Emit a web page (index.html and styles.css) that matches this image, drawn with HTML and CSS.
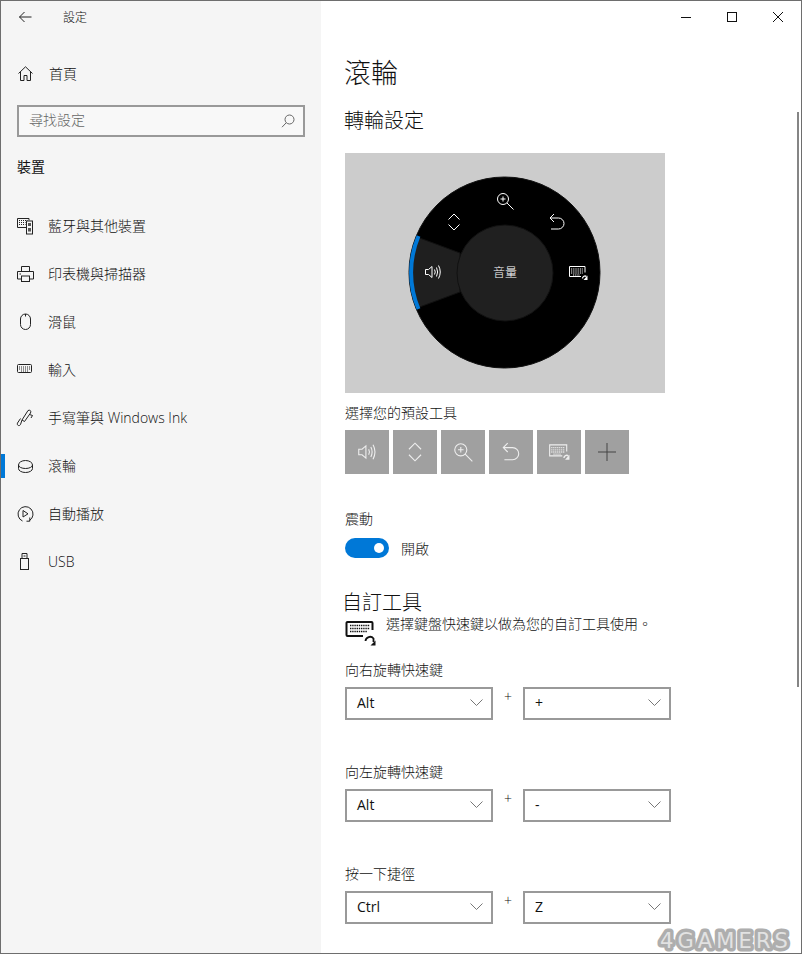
FILE: index.html
```html
<!DOCTYPE html>
<html lang="zh-Hant">
<head>
<meta charset="utf-8">
<title>設定</title>
<link rel="stylesheet" href="styles.css">
</head>
<body>
<svg class="defs" width="0" height="0" aria-hidden="true">
  <symbol id="i-vol" viewBox="0 0 20 20"><path d="M2.5 7.5H5.5L9 4.5V15.5L5.5 12.5H2.5Z"/><path d="M11.5 7.5Q13 10 11.5 12.5M13.5 5.5Q15.8 10 13.5 14.5M15.5 3.5Q19 10 15.5 16.5"/></symbol>
  <symbol id="i-scroll" viewBox="0 0 20 20"><path d="M4.5 7.5L10 2L15.5 7.5M4.5 12.5L10 18L15.5 12.5"/></symbol>
  <symbol id="i-zoom" viewBox="0 0 20 20"><circle cx="8" cy="8" r="5.5"/><path d="M5.5 8H10.5M8 5.5V10.5M12 12L18.5 18.5"/></symbol>
  <symbol id="i-undo" viewBox="0 0 20 20"><path d="M7 2L3 6L7 10M3 6H11.5A5.5 5.5 0 0 1 11.5 17H4"/></symbol>
  <symbol id="i-kbd" viewBox="0 0 20 20"><path d="M13 13.5H1.5V3.5H17V9.5"/><path class="keys" d="M3 6H15.5M3 8H15.5M3 10H15.5M5 12H12"/><path class="hook" d="M14.5 15.5A2.5 2.5 0 0 1 18.5 13.5"/><path class="head" d="M19.5 12.5V17H15.5Z"/></symbol>
  <symbol id="i-plus" viewBox="0 0 20 20"><path d="M10 1V19M1 10H19"/></symbol>
</svg>

<div class="window">
  <aside class="sidebar">
    <div class="titlebar">
      <svg class="back" width="16" height="16" viewBox="0 0 16 16"><path d="M2.5 8H14.5M7.5 3L2.5 8L7.5 13"/></svg>
      <span class="app-name">設定</span>
    </div>

    <a class="nav-row home">
      <svg class="icon" width="18" height="18" viewBox="0 0 18 18"><path d="M2.5 8.5L9.5 1.8L16.5 8.5M4.5 7V15.5H8V10.5H11V15.5H14.5V7"/></svg>
      <span>首頁</span>
    </a>

    <div class="search">
      <span class="placeholder">尋找設定</span>
      <svg width="14" height="14" viewBox="0 0 14 14"><circle cx="8.5" cy="5.5" r="4.5"/><path d="M5.2 8.8L1 13.2"/></svg>
    </div>

    <h2 class="section">裝置</h2>

    <nav class="nav">
      <a class="nav-row">
        <svg class="icon" width="18" height="18" viewBox="0 0 18 18"><path d="M10.5 10.5H1.5V1.5H13V3.5"/><path class="dots" d="M3 3.5H11.5M3 5.5H9.5M3 7.5H9.5"/><rect x="10.5" y="4" width="6" height="13"/><rect class="solid" x="12" y="6" width="3" height="3"/><rect class="solid" x="12" y="11" width="3" height="3.5"/></svg>
        <span>藍牙與其他裝置</span>
      </a>
      <a class="nav-row">
        <svg class="icon" width="18" height="18" viewBox="0 0 18 18"><path d="M5.5 6.5V1.5H13.5V6.5M5.5 14H1.5V6.5H17.5V14H13.5"/><rect x="5.5" y="11" width="8" height="5.5"/><path d="M3.5 9H5"/></svg>
        <span>印表機與掃描器</span>
      </a>
      <a class="nav-row">
        <svg class="icon" width="18" height="18" viewBox="0 0 18 18"><rect x="4.5" y="1" width="10" height="15.5" rx="5"/><path d="M9.5 1V3.5"/></svg>
        <span>滑鼠</span>
      </a>
      <a class="nav-row">
        <svg class="icon" width="18" height="18" viewBox="0 0 18 18"><rect x="1.5" y="3.5" width="14" height="8" rx="1"/><path class="dots" d="M3 6H14.5M3 8H14.5M5 10H12"/></svg>
        <span>輸入</span>
      </a>
      <a class="nav-row">
        <svg class="icon" width="18" height="18" viewBox="0 0 18 18"><path d="M12 1.5C14 .5 15.5 2 14.5 4L8.5 12.5L6 11ZM13.5 5.5L16.5 6.5L15 9M6 11L4.5 15.5C3.5 17.5 .5 16.5 1.5 14L4.5 9.5"/></svg>
        <span>手寫筆與 Windows Ink</span>
      </a>
      <a class="nav-row active">
        <svg class="icon" width="18" height="18" viewBox="0 0 18 18"><path d="M2.5 8A7 4.5 0 0 1 16.5 8V11.5A7 4 0 0 1 2.5 11.5ZM2.5 8A7 3.5 0 0 0 16.5 8"/></svg>
        <span>滾輪</span>
      </a>
      <a class="nav-row">
        <svg class="icon" width="18" height="18" viewBox="0 0 18 18"><path d="M6.5 16A7.5 7.5 0 1 1 13.5 15.5M13.8 12.5V16.2H10.5"/><path d="M7 5.5L12 8.8L7 12Z"/></svg>
        <span>自動播放</span>
      </a>
      <a class="nav-row">
        <svg class="icon" width="18" height="18" viewBox="0 0 18 18"><rect x="4.5" y="5.5" width="8" height="11"/><path d="M6 5.5V.5H11V5.5M7.5 3H9.5"/></svg>
        <span>USB</span>
      </a>
    </nav>
  </aside>

  <main class="main">
    <div class="controls">
      <span class="ctrl"><svg width="12" height="12" viewBox="0 0 12 12"><path d="M1 6.5H11"/></svg></span>
      <span class="ctrl"><svg width="12" height="12" viewBox="0 0 12 12"><rect x="1.5" y="1.5" width="9" height="9"/></svg></span>
      <span class="ctrl"><svg width="12" height="12" viewBox="0 0 12 12"><path d="M1 1L11 11M11 1L1 11"/></svg></span>
    </div>

    <h1 class="title">滾輪</h1>
    <h2 class="subtitle">轉輪設定</h2>

    <div class="panel">
      <svg class="dial" width="320" height="240" viewBox="0 0 320 240">
        <circle cx="159.5" cy="119.5" r="95.5" fill="#000"/>
        <path d="M72 84A95.5 95.5 0 0 0 72 155L115 139V100Z" fill="#1f1f1f"/>
        <circle cx="160" cy="120" r="48" fill="#202020"/>
        <path class="rim" d="M73.5 83A93.5 93.5 0 0 0 73.5 156"/>
        <text class="dial-label" x="160" y="123.5">音量</text>
        <use class="dial-ic" href="#i-vol" x="78" y="109" width="20" height="20"/>
        <use class="dial-ic" href="#i-scroll" x="99" y="59" width="20" height="20"/>
        <use class="dial-ic" href="#i-zoom" x="150" y="38" width="20" height="20"/>
        <use class="dial-ic" href="#i-undo" x="202" y="59" width="20" height="20"/>
        <use class="dial-ic" href="#i-kbd" x="223" y="110" width="20" height="20"/>
      </svg>
    </div>

    <p class="label preset-label">選擇您的預設工具</p>
    <div class="tiles">
      <span class="tile"><svg width="22" height="22"><use href="#i-vol"/></svg></span>
      <span class="tile"><svg width="22" height="22"><use href="#i-scroll"/></svg></span>
      <span class="tile"><svg width="22" height="22"><use href="#i-zoom"/></svg></span>
      <span class="tile"><svg width="22" height="22"><use href="#i-undo"/></svg></span>
      <span class="tile"><svg width="22" height="22"><use href="#i-kbd"/></svg></span>
      <span class="tile add"><svg width="20" height="20"><use href="#i-plus"/></svg></span>
    </div>

    <p class="label vibrate-label">震動</p>
    <div class="toggle-row">
      <span class="toggle"><span class="knob"></span></span>
      <span class="toggle-text">開啟</span>
    </div>

    <h2 class="subtitle custom-title">自訂工具</h2>
    <div class="custom-desc">
      <svg class="custom-icon" width="31" height="26" viewBox="0 0 31 26">
        <path d="M18 16H2.5A1 1 0 0 1 1.5 15V3A1 1 0 0 1 2.5 2H26.5A1 1 0 0 1 27.5 3V10"/>
        <path class="custom-keys" d="M5 5.5H25M5 8.5H25M5 11.5H22"/>
        <path class="custom-hook" d="M20.5 21A4.5 4.5 0 0 1 28.5 18.5V22"/>
        <path class="custom-head" d="M30.5 20.5V25.5H25.5Z"/>
      </svg>
      <p>選擇鍵盤快速鍵以做為您的自訂工具使用。</p>
    </div>

    <section class="shortcut first">
      <p class="label">向右旋轉快速鍵</p>
      <div class="combo-row">
        <div class="combo"><span>Alt</span><svg width="13" height="8" viewBox="0 0 13 8"><path d="M.5 .5L6.5 6.5L12.5 .5"/></svg></div>
        <span class="joiner">+</span>
        <div class="combo"><span>+</span><svg width="13" height="8" viewBox="0 0 13 8"><path d="M.5 .5L6.5 6.5L12.5 .5"/></svg></div>
      </div>
    </section>
    <section class="shortcut">
      <p class="label">向左旋轉快速鍵</p>
      <div class="combo-row">
        <div class="combo"><span>Alt</span><svg width="13" height="8" viewBox="0 0 13 8"><path d="M.5 .5L6.5 6.5L12.5 .5"/></svg></div>
        <span class="joiner">+</span>
        <div class="combo"><span>-</span><svg width="13" height="8" viewBox="0 0 13 8"><path d="M.5 .5L6.5 6.5L12.5 .5"/></svg></div>
      </div>
    </section>
    <section class="shortcut">
      <p class="label">按一下捷徑</p>
      <div class="combo-row">
        <div class="combo"><span>Ctrl</span><svg width="13" height="8" viewBox="0 0 13 8"><path d="M.5 .5L6.5 6.5L12.5 .5"/></svg></div>
        <span class="joiner">+</span>
        <div class="combo"><span>Z</span><svg width="13" height="8" viewBox="0 0 13 8"><path d="M.5 .5L6.5 6.5L12.5 .5"/></svg></div>
      </div>
    </section>

    <span class="scrollbar"></span>
  </main>

  <svg class="watermark" width="144" height="26" viewBox="0 0 144 26"><text x="4" y="21">4GAMERS</text></svg>
</div>
</body>
</html>
```
FILE: styles.css
```css
* { box-sizing: border-box; }
html, body { margin: 0; padding: 0; background: #fff; }
body {
  font-family: "Open Sans", "Noto Sans CJK TC", sans-serif;
  font-size: 14px;
  line-height: 20px;
  font-weight: 300;
  color: #111;
}
h1, h2, p { margin: 0; font-weight: 300; }
svg { display: block; flex: none; fill: none; stroke: currentColor; stroke-width: 1; }
.defs { position: absolute; }
.dots { stroke-dasharray: 1 1; }
.keys { stroke-dasharray: 1 .8; stroke-width: 1.2; }
.hook { stroke-width: 1.3; }
.head { fill: currentColor; stroke: none; }

.window {
  position: relative;
  width: 802px;
  height: 954px;
  display: flex;
  border: 1px solid #6e6e6e;
  overflow: hidden;
}

/* Sidebar */
.sidebar { width: 320px; flex: none; background: #f5f5f5; }
.titlebar { height: 32px; display: flex; align-items: center; padding: 1px 0 0 16px; }
.back { stroke: #222; margin-top: -1px; }
.app-name { margin-left: 30px; font-size: 12px; }
.nav-row {
  position: relative;
  height: 48px;
  display: flex;
  align-items: center;
  gap: 14px;
  padding-left: 15px;
}
.home { margin-top: 17px; gap: 15px; }
.icon { stroke: #222; }
.solid { fill: #555; stroke: none; }
.search {
  margin: 7px 16px 0 16px;
  height: 32px;
  border: 2px solid #999;
  background: #f8f8f8;
  display: flex;
  align-items: center;
  justify-content: space-between;
  padding: 0 8px 0 10px;
  color: #666;
}
.placeholder { margin-top: -2px; }
.section { margin: 18px 0 0 16px; font-size: 14px; line-height: 24px; font-weight: 400; }
.nav { margin-top: 23px; }
.active::before {
  content: "";
  position: absolute;
  left: 0;
  top: 12px;
  width: 4px;
  height: 24px;
  background: #0078d7;
}

/* Main column */
.main { position: relative; flex: 1; background: #fff; padding-left: 24px; }
.controls { height: 32px; display: flex; justify-content: flex-end; }
.ctrl { width: 46px; display: flex; align-items: center; justify-content: center; color: #111; }
.title { margin: 20px 0 0 -1px; font-size: 27px; line-height: 40px; }
.subtitle { margin: 14px 0 0 -1px; font-size: 20px; line-height: 28px; }
.panel { margin-top: 18px; width: 320px; height: 240px; background: #ccc; }
.rim { stroke: #0078d7; stroke-width: 4; }
.dial-label { fill: #fff; stroke: none; font-size: 12px; text-anchor: middle; }
.dial-ic { color: #fff; }
.label { line-height: 20px; }
.preset-label { margin-top: 10px; }
.tiles { margin-top: 7px; display: flex; gap: 4px; }
.tile {
  width: 44px;
  height: 44px;
  background: #a0a0a0;
  color: #eee;
  display: flex;
  align-items: center;
  justify-content: center;
}
.add { color: #444; }
.vibrate-label { margin-top: 35px; }
.toggle-row { margin-top: 9px; display: flex; align-items: center; gap: 12px; }
.toggle-text { line-height: 18px; padding-top: 2px; }
.toggle {
  width: 44px;
  height: 20px;
  border-radius: 10px;
  background: #0078d7;
  display: flex;
  align-items: center;
  justify-content: flex-end;
  padding-right: 5px;
}
.knob { width: 10px; height: 10px; border-radius: 50%; background: #fff; }
.custom-title { margin: 33px 0 0 -3px; line-height: 24px; }
.custom-desc { display: flex; align-items: flex-start; gap: 10px; margin-top: -1px; }
.custom-icon { margin-top: 6px; color: #111; stroke-width: 2; }
.custom-keys { stroke-width: 1.6; stroke-dasharray: 1.4 .8; }
.custom-hook { stroke-width: 1.8; }
.custom-head { fill: #111; stroke: none; }
.shortcut { margin-top: 42px; }
.shortcut.first { margin-top: 14px; }
.combo-row { margin-top: 7px; display: flex; }
.combo {
  width: 148px;
  height: 33px;
  border: 2px solid #999;
  display: flex;
  align-items: center;
  justify-content: space-between;
  padding: 0 8px 2px 10px;
  font-weight: 400;
}
.combo svg { stroke: #777; margin-top: 1px; }
.joiner { width: 30px; text-align: center; line-height: 20px; }

.scrollbar {
  position: absolute;
  top: 111px;
  right: 2px;
  width: 2px;
  height: 575px;
  background: #858585;
}

.watermark { position: absolute; right: 1px; bottom: 0; }
.watermark text {
  font-family: "DejaVu Sans", sans-serif;
  font-weight: 400;
  font-size: 21px;
  letter-spacing: 4.1px;
  fill: #e2e2e2;
  stroke: #aeaeae;
  stroke-width: 7;
  stroke-linejoin: round;
  paint-order: stroke;
}
```
